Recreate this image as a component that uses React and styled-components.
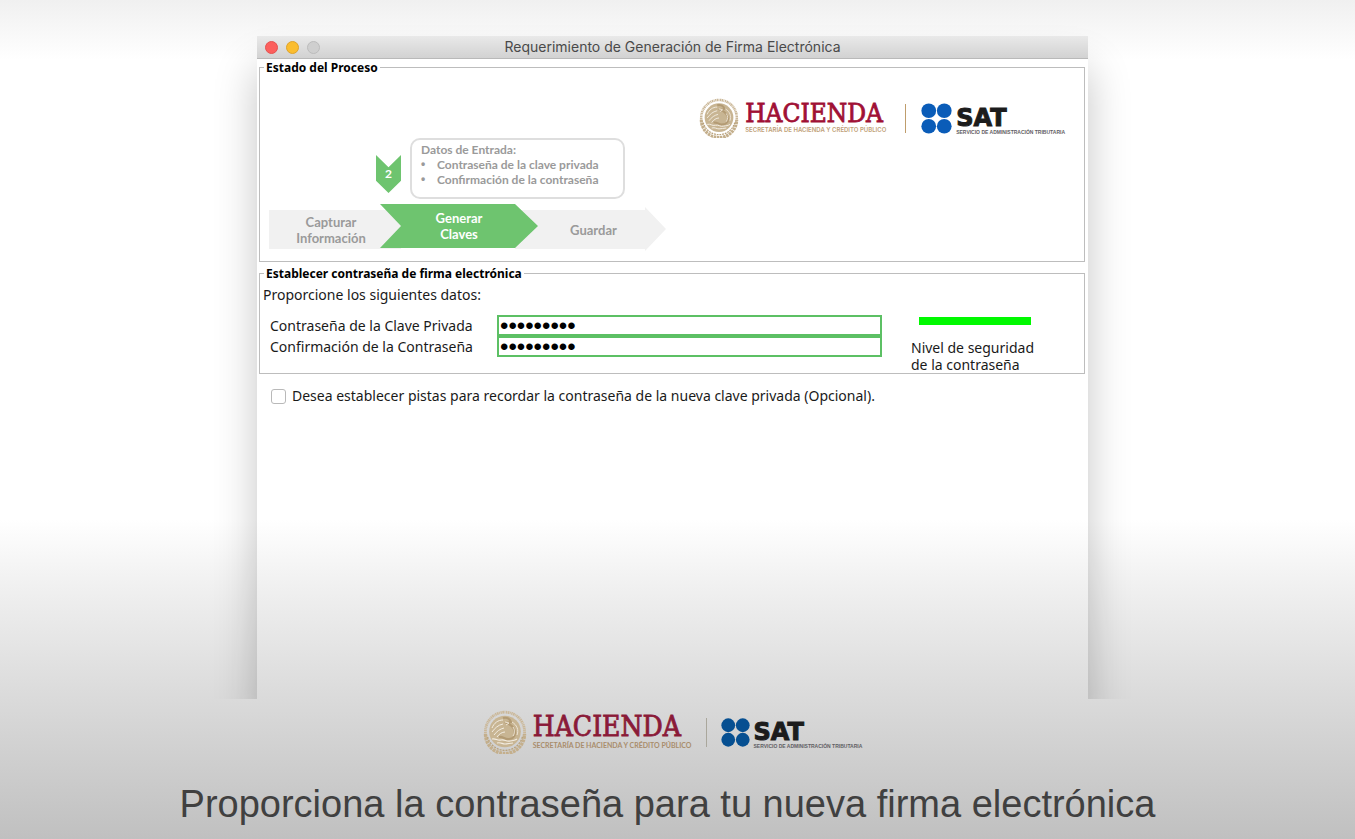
import React, { useState } from "react";
import styled, { createGlobalStyle } from "styled-components";

const GlobalStyle = createGlobalStyle`
  *, *::before, *::after { box-sizing: border-box; }
  body { margin: 0; }
`;

const Page = styled.div`
  display: flex;
  flex-direction: column;
  min-height: 100vh;
  min-width: 1240px;
  overflow: hidden;
  font-family: "Noto Sans", "Open Sans", sans-serif;
  color: #1a1a1a;
  background: linear-gradient(
    to bottom,
    #f0f0f0 0,
    #ffffff 60px,
    #ffffff 62%,
    #f0f0f0 70%,
    #d9d9d9 84%,
    #c0c0c0 100%
  );
`;

const Stage = styled.main`
  display: flex;
  flex: 1;
  overflow: hidden;
  padding: 36px 267px 0 257px;
`;

const Window = styled.section`
  flex: 1;
  box-shadow: 0 32px 40px rgba(0, 0, 0, 0.23);
`;

const TitleBar = styled.header`
  display: grid;
  grid-template-columns: 80px 1fr 88px;
  align-items: center;
  height: 23px;
  padding-left: 8px;
  background: linear-gradient(#e9e9e9, #d2d2d2);
  border-bottom: 1px solid #b9b9b9;
`;

const WindowButtons = styled.div`
  display: flex;
  gap: 8px;
`;

const WindowButton = styled.button`
  width: 13px;
  height: 13px;
  padding: 0;
  border: 1px solid ${(p) => p.$edge};
  border-radius: 50%;
  background: ${(p) => p.$fill};
`;

const WindowTitle = styled.h1`
  margin: 0;
  font: 400 14px/20px Inter, sans-serif;
  color: #4a4a4a;
  text-align: center;
  white-space: nowrap;
`;

const Body = styled.div`
  display: flex;
  flex-direction: column;
  gap: 5px;
  padding: 2px 3px 0 2px;
`;

const Group = styled.fieldset`
  min-width: 0;
  margin: 0;
  padding: 0;
  border: 1px solid #bdbdbd;
`;

const Legend = styled.legend`
  margin-left: 4px;
  padding: 0 2px;
  font-size: 12px;
  font-weight: 700;
  line-height: 13px;
  color: #000;
`;

const StatusRow = styled.div`
  display: flex;
  justify-content: space-between;
  align-items: flex-start;
  padding: 0 19px 10px 9px;
`;

const Process = styled.div`
  padding-top: 64px;
  font-family: Lato, sans-serif;
  font-weight: 700;
  color: #9a9a9a;
`;

const CurrentStep = styled.div`
  display: flex;
  align-items: flex-end;
  gap: 9px;
  margin: 0 0 5px 107px;
`;

const Marker = styled.div`
  width: 25px;
  height: 38px;
  margin-bottom: 6px;
  font-size: 12px;
  line-height: 38px;
  text-align: center;
  color: #fff;
  background: #6ec46f;
  clip-path: polygon(0 0, 50% 32%, 100% 0, 100% 68%, 50% 100%, 0 68%);
`;

const Callout = styled.div`
  width: 215px;
  height: 61px;
  padding: 2px 9px;
  border: 2px solid #dedede;
  border-radius: 10px;
  font-size: 12px;
  line-height: 15px;
`;

const CalloutList = styled.ul`
  margin: 0;
  padding-left: 16px;
  list-style: none;
`;

const CalloutItem = styled.li`
  display: flex;
  white-space: nowrap;
  &::before {
    content: "•";
    width: 16px;
    margin-left: -16px;
    font-family: "Liberation Sans", sans-serif;
  }
`;

const Steps = styled.ol`
  display: flex;
  align-items: flex-start;
  margin: 0;
  padding: 0;
  list-style: none;
  font-size: 13px;
  line-height: 16px;
  text-align: center;
`;

const Step = styled.li`
  display: flex;
  flex-direction: column;
  justify-content: center;
  background: #f1f1f1;
`;

const FirstStep = styled(Step)`
  width: 132px;
  height: 39px;
  margin-top: 6px;
  padding-right: 8px;
`;

const ActiveStep = styled(Step)`
  z-index: 1;
  width: 158px;
  height: 44px;
  margin-left: -21px;
  color: #fff;
  background: #6ec46f;
  clip-path: polygon(0 0, 135px 0, 100% 50%, 135px 100%, 0 100%, 21px 50%);
`;

const LastStep = styled(Step)`
  width: 151px;
  height: 44px;
  margin: 3px 0 0 -23px;
  padding: 2px 0 0 6px;
  clip-path: polygon(0 3px, 130px 3px, 130px 0, 100% 50%, 130px 100%, 130px 42px, 0 42px);
`;

const Brand = styled.div`
  display: flex;
  align-items: center;
  height: ${(p) => (p.$large ? 46 : 42)}px;
`;

const BrandText = styled.div`
  display: flex;
  flex-direction: column;
  white-space: nowrap;
`;

const HaciendaBlock = styled(BrandText)`
  min-width: 145px;
`;

const Hacienda = styled.span`
  font: 400 ${(p) => (p.$large ? 28 : 26)}px / ${(p) => (p.$large ? 24 : 22)}px
    "DejaVu Serif Condensed", "DejaVu Serif", serif;
  -webkit-text-stroke: 0.8px currentColor;
  color: ${(p) => (p.$large ? "#8a1a38" : "#a01035")};
`;

const HaciendaSub = styled.span`
  margin-top: 2px;
  font: ${(p) => (p.$large ? "700 7px/8px Lato" : "600 6px/8px Inter")}, sans-serif;
  color: ${(p) => (p.$large ? "#a98d6c" : "#bf9f78")};
`;

const Divider = styled.span`
  width: 1px;
  height: 29px;
  margin: 0 ${(p) => (p.$large ? 14 : 15)}px;
  background: ${(p) => (p.$large ? "#aaa79c" : "#bf9d6c")};
`;

const Sat = styled.span`
  font: 700 24px/18px "DejaVu Sans", sans-serif;
  -webkit-text-stroke: 1px currentColor;
  color: #1c1c1c;
`;

const SatSub = styled.span`
  margin-top: 2px;
  font: 700 5px/6px "Liberation Sans", sans-serif;
  color: #5f6064;
`;

const SatBlock = styled(BrandText)`
  margin-left: 4px;
  padding-top: 8px;
`;

const SealBlock = styled.span`
  display: flex;
  margin-right: 6px;
`;

function Seal({ size }) {
  return (
    <svg width={size} height={size} viewBox="0 0 44 44" fill="none" aria-hidden="true">
      <path d="M3.6 28.5A19.6 19.6 0 1 1 40.4 28.5" stroke="#cbb899" strokeWidth="2.8" strokeDasharray="1.3 0.5 1.7 0.5 0.9 0.6" />
      <path d="M2.5 24A19.5 19.5 0 0 0 41.5 24" stroke="#c4af8c" strokeWidth="3.4" strokeDasharray="2.8 0.7" />
      <path d="M4.6 27A18 18 0 0 0 39.4 27" stroke="#b9a27c" strokeWidth="1.4" strokeDasharray="2 1" />
      <circle cx="22" cy="21.5" r="15.8" fill="#c8b593" />
      <path d="M20 8c4-1 7 1 8 4l-4 1c4 2 8 5 8 10 0 4-3 6-6 6-4 1-6-3-10-2" stroke="#b39b74" strokeWidth="2.2" />
      <path d="M9 18c2-5 6-8 11-8M9 22c3-4 6-7 11-8M11 25c3-4 6-6 10-7M14 27c2-3 5-5 8-5" stroke="#f3ede2" strokeWidth="1" />
      <path d="M29 12c5 3 7 8 5 13M22 12l4 1-3 2M30 17c2 3 2 6 0 9" stroke="#eee5d6" strokeWidth="1" />
      <path d="M9 29c4-1 5 2 9 1s5 2 9 1 4 0 7-2M14 33c4-1 5 1 8 1s5-1 8-1" stroke="#f3ede2" strokeWidth="1.1" />
    </svg>
  );
}

function SatDots({ size, fill }) {
  return (
    <svg width={size} height={size} viewBox="0 0 32 32" fill={fill} aria-hidden="true">
      <circle cx="8" cy="8" r="7.6" />
      <circle cx="24" cy="8" r="7.6" />
      <circle cx="8" cy="24" r="7.6" />
      <circle cx="24" cy="24" r="7.6" />
    </svg>
  );
}

function BrandLogos({ large }) {
  return (
    <Brand $large={large}>
      <SealBlock>
        <Seal size={large ? 44 : 40} />
      </SealBlock>
      <HaciendaBlock>
        <Hacienda $large={large}>HACIENDA</Hacienda>
        <HaciendaSub $large={large}>SECRETARÍA DE HACIENDA Y CRÉDITO PÚBLICO</HaciendaSub>
      </HaciendaBlock>
      <Divider $large={large} />
      <SatDots size={large ? 29 : 31} fill={large ? "#064f91" : "#0a5cb8"} />
      <SatBlock>
        <Sat>SAT</Sat>
        <SatSub>SERVICIO DE ADMINISTRACIÓN TRIBUTARIA</SatSub>
      </SatBlock>
    </Brand>
  );
}

const WindowLogos = styled.div`
  padding-top: 23px;
`;

const Intro = styled.p`
  margin: 0;
  padding: 5px 0 10px 3px;
  font-size: 14px;
  line-height: 20px;
`;

const Fields = styled.div`
  display: grid;
  grid-template-columns: 227px 1fr 202px;
  padding-left: 10px;
`;

const FieldLabel = styled.label`
  grid-column: 1;
  font-size: 14px;
  line-height: 21px;
`;

const PasswordInput = styled.input`
  grid-column: 2;
  width: 100%;
  height: 21px;
  padding: 0 1px;
  border: 2px solid #5cc064;
  border-radius: 0;
  outline: none;
  background: #fff;
  color: #000;
  font: 24px/17px "Liberation Sans", sans-serif;
`;

const Strength = styled.div`
  grid-column: 3;
  grid-row: 1 / span 3;
  padding: 2px 0 0 29px;
  font-size: 14px;
  line-height: 17px;
`;

const StrengthBar = styled.div`
  width: 112px;
  height: 8px;
  margin: 0 0 14px 8px;
  background: #00f900;
`;

const HintRow = styled.label`
  display: flex;
  align-items: center;
  gap: 6px;
  padding: 7px 0 0 12px;
  font-size: 14px;
  line-height: 20px;
`;

const Checkbox = styled.input`
  appearance: none;
  width: 15px;
  height: 15px;
  margin: 0;
  border: 1px solid #b9b9b9;
  border-radius: 3px;
  background: #fff;
  &:checked { background: #3b82f6; }
`;

const Footer = styled.footer`
  display: flex;
  flex-direction: column;
  align-items: center;
  height: 140px;
  padding: 10px 10px 0 0;
`;

const Caption = styled.p`
  margin: 25px 10px 0 0;
  font: 400 38px/48px "Liberation Sans", Arial, sans-serif;
  color: #404040;
  white-space: nowrap;
`;

export default function App() {
  const [password, setPassword] = useState("Clave.123");
  const [confirmation, setConfirmation] = useState("Clave.123");
  const [hints, setHints] = useState(false);

  return (
    <Page>
      <GlobalStyle />
      <Stage>
        <Window>
          <TitleBar>
            <WindowButtons>
              <WindowButton aria-label="Cerrar" $fill="#fc5f5d" $edge="#e5514f" />
              <WindowButton aria-label="Minimizar" $fill="#fbbd2f" $edge="#dfa32a" />
              <WindowButton aria-label="Ampliar" $fill="#cfcfcf" $edge="#bcbcbc" />
            </WindowButtons>
            <WindowTitle>Requerimiento de Generación de Firma Electrónica</WindowTitle>
          </TitleBar>
          <Body>
            <Group>
              <Legend>Estado del Proceso</Legend>
              <StatusRow>
                <Process>
                  <CurrentStep>
                    <Marker>2</Marker>
                    <Callout>
                      Datos de Entrada:
                      <CalloutList>
                        <CalloutItem>Contraseña de la clave privada</CalloutItem>
                        <CalloutItem>Confirmación de la contraseña</CalloutItem>
                      </CalloutList>
                    </Callout>
                  </CurrentStep>
                  <Steps>
                    <FirstStep>
                      <span>Capturar</span>
                      <span>Información</span>
                    </FirstStep>
                    <ActiveStep aria-current="step">
                      <span>Generar</span>
                      <span>Claves</span>
                    </ActiveStep>
                    <LastStep>
                      <span>Guardar</span>
                    </LastStep>
                  </Steps>
                </Process>
                <WindowLogos>
                  <BrandLogos />
                </WindowLogos>
              </StatusRow>
            </Group>
            <Group>
              <Legend>Establecer contraseña de firma electrónica</Legend>
              <Intro>Proporcione los siguientes datos:</Intro>
              <Fields>
                <FieldLabel htmlFor="clave">Contraseña de la Clave Privada</FieldLabel>
                <PasswordInput id="clave" type="password" value={password} onChange={(e) => setPassword(e.target.value)} />
                <FieldLabel htmlFor="confirmacion">Confirmación de la Contraseña</FieldLabel>
                <PasswordInput id="confirmacion" type="password" value={confirmation} onChange={(e) => setConfirmation(e.target.value)} />
                <Strength>
                  <StrengthBar role="meter" aria-label="Nivel de seguridad" aria-valuemin={0} aria-valuemax={100} aria-valuenow={100} />
                  Nivel de seguridad
                  <br />
                  de la contraseña
                </Strength>
              </Fields>
            </Group>
            <HintRow>
              <Checkbox type="checkbox" checked={hints} onChange={(e) => setHints(e.target.checked)} />
              Desea establecer pistas para recordar la contraseña de la nueva clave privada (Opcional).
            </HintRow>
          </Body>
        </Window>
      </Stage>
      <Footer>
        <BrandLogos large />
        <Caption>Proporciona la contraseña para tu nueva firma electrónica</Caption>
      </Footer>
    </Page>
  );
}
